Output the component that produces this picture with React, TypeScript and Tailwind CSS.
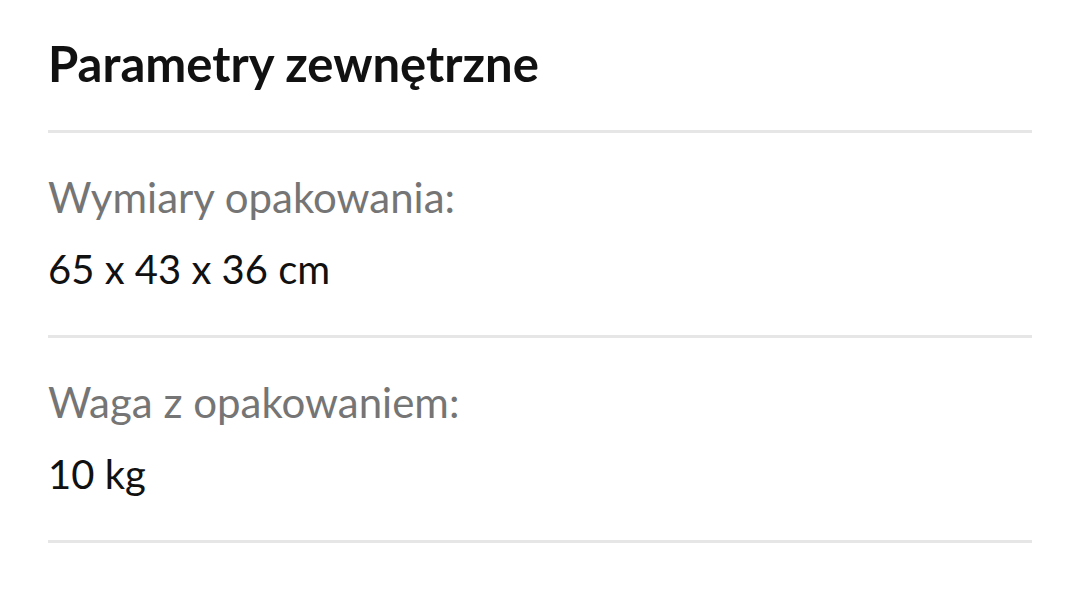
const rows = [
  { label: "Wymiary opakowania:", value: "65 x 43 x 36 cm" },
  { label: "Waga z opakowaniem:", value: "10 kg" },
];

export default function App() {
  return (
    <div className="w-[1080px] h-[595px] bg-white pl-12 pr-12 pt-[34px] font-['Lato','Noto_Sans',sans-serif] overflow-hidden">
      <h2 className="text-[49px] leading-[1.2] font-bold text-[#111111] mb-[37px]">Parametry zewnętrzne</h2>
      <div className="h-[3px] bg-[#e6e6e6]" />
      {rows.map((row) => (
        <div key={row.label}>
          <div className="pt-10 pb-[42px] flex flex-col gap-6">
            <div className="text-[42px] leading-[48px] text-[#757575]">{row.label}</div>
            <div className="text-[40px] leading-[48px] text-[#111111]">{row.value}</div>
          </div>
          <div className="h-[3px] bg-[#e6e6e6]" />
        </div>
      ))}
    </div>
  );
}
